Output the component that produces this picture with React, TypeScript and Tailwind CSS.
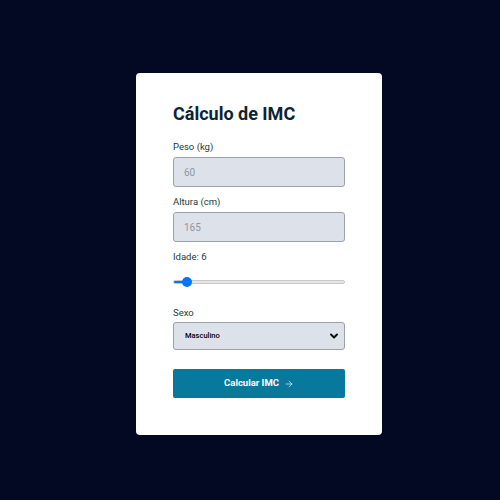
import React, { useState } from 'react';
import { ArrowRight } from 'lucide-react';

const font = { fontFamily: 'Roboto, "Liberation Sans", sans-serif' };

const App: React.FC = () => {
  const [idade, setIdade] = useState(6);
  const pct = ((idade - 1) / 99) * 100;

  return (
    <div className="min-h-[500px] w-full bg-[#030923] flex items-center justify-center pl-[18px] pt-[8px]" style={font}>
      <div className="w-[246px] h-[362px] bg-white rounded-[4px] px-[37px] pt-[27px]">
        <h1 className="text-[18px] leading-[28px] font-bold text-[#0c2433]">Cálculo de IMC</h1>

        <label className="block mt-[12px] text-[9.5px] leading-[14px] text-[#17403c]">Peso (kg)</label>
        <input
          type="number"
          placeholder="60"
          className="mt-[3px] block w-full h-[30px] px-[10px] text-[10px] bg-[#dde2ea] border border-[#9aa1ab] rounded-[3px] placeholder:text-[#8f96a0] outline-none"
        />

        <label className="block mt-[8px] text-[9.5px] leading-[14px] text-[#17403c]">Altura (cm)</label>
        <input
          type="number"
          placeholder="165"
          className="mt-[3px] block w-full h-[30px] px-[10px] text-[10px] bg-[#dde2ea] border border-[#9aa1ab] rounded-[3px] placeholder:text-[#8f96a0] outline-none"
        />

        <label className="block mt-[8px] text-[9.5px] leading-[14px] text-[#17403c]">Idade: {idade}</label>
        <input
          type="range"
          min={1}
          max={100}
          value={idade}
          onChange={(e) => setIdade(Number(e.target.value))}
          style={{ background: `linear-gradient(to right, #0075ff ${pct}%, #e6e6e6 ${pct}%)` }}
          className="mt-[16px] block w-full h-[4px] rounded-full appearance-none border border-[#c8c8c8] outline-none [&::-webkit-slider-thumb]:appearance-none [&::-webkit-slider-thumb]:w-[10px] [&::-webkit-slider-thumb]:h-[10px] [&::-webkit-slider-thumb]:rounded-full [&::-webkit-slider-thumb]:bg-[#0075ff]"
        />

        <label className="block mt-[22px] text-[9.5px] leading-[14px] text-[#17403c]">Sexo</label>
        <div className="relative mt-[2px]">
          <select className="block w-full h-[28px] pl-[11px] text-[7.5px] font-medium text-black bg-[#dde2ea] border border-[#9aa1ab] rounded-[3px] appearance-none outline-none">
            <option>Masculino</option>
            <option>Feminino</option>
          </select>
          <svg
            className="absolute right-[6px] top-[9px] pointer-events-none"
            width="10"
            height="10"
            viewBox="0 0 10 10"
            fill="none"
            stroke="#111"
            strokeWidth="2"
            strokeLinecap="round"
            strokeLinejoin="round"
          >
            <path d="M2 3.5 L5 6.5 L8 3.5" />
          </svg>
        </div>

        <button className="mt-[19px] w-full h-[29px] bg-[#08789c] rounded-[2px] text-white text-[9.5px] font-bold flex items-center justify-center gap-[5px]">
          Calcular IMC
          <ArrowRight size={10} strokeWidth={1.5} />
        </button>
      </div>
    </div>
  );
};

export default App;
